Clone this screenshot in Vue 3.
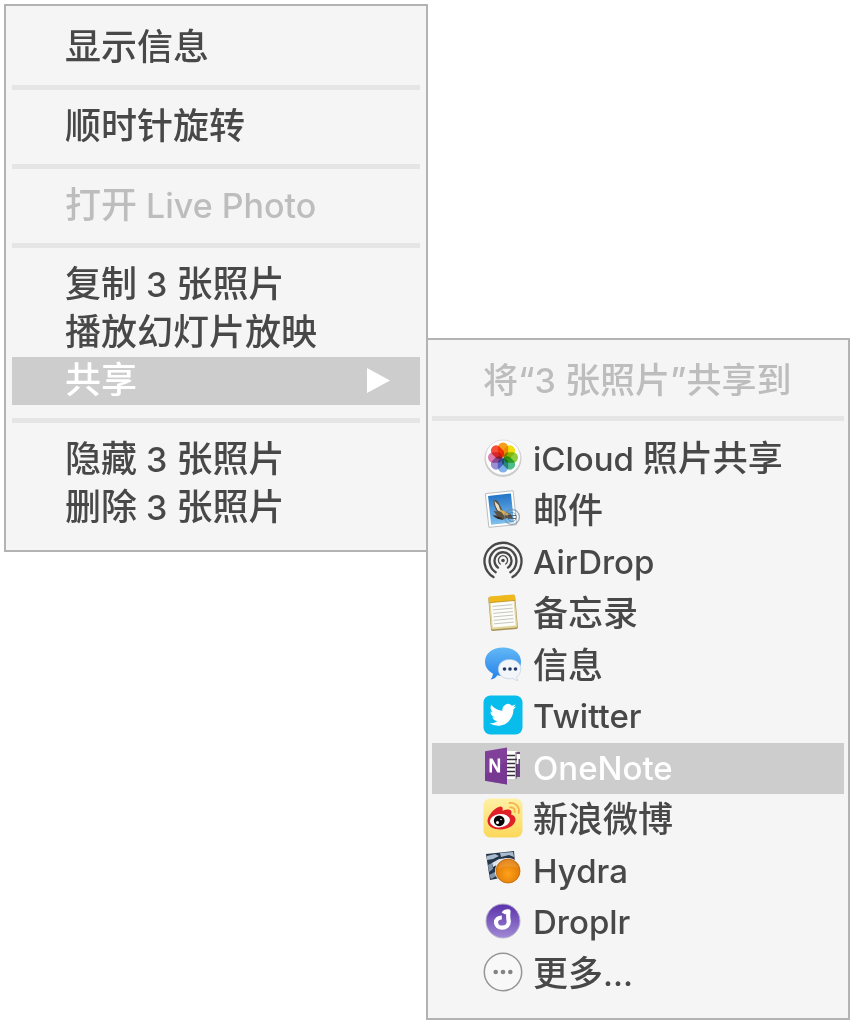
<script setup>
const groups = [
  [{ label: '显示信息' }],
  [{ label: '顺时针旋转' }],
  [{ label: '打开 Live Photo', disabled: true }],
  [{ label: '复制 3 张照片' }, { label: '播放幻灯片放映' }, { label: '共享', submenu: true }],
  [{ label: '隐藏 3 张照片' }, { label: '删除 3 张照片' }]
]

const title = '将“3 张照片”共享到'

const targets = [
  { id: 'photos', label: 'iCloud 照片共享' },
  { id: 'mail', label: '邮件' },
  { id: 'airdrop', label: 'AirDrop' },
  { id: 'notes', label: '备忘录' },
  { id: 'messages', label: '信息' },
  { id: 'twitter', label: 'Twitter' },
  { id: 'onenote', label: 'OneNote', active: true },
  { id: 'weibo', label: '新浪微博' },
  { id: 'hydra', label: 'Hydra' },
  { id: 'droplr', label: 'Droplr' },
  { id: 'more', label: '更多...' }
]

const petals = [
  { color: '#f9a01b', angle: 0 },
  { color: '#f3e00c', angle: 45 },
  { color: '#8fd03e', angle: 90 },
  { color: '#4fbf8b', angle: 135 },
  { color: '#7fb3ec', angle: 180 },
  { color: '#9d8fd4', angle: 225 },
  { color: '#df7fb0', angle: 270 },
  { color: '#f8503c', angle: 315 }
]

// Splits a label into Latin and Chinese runs so each gets its own size.
const runs = (text) =>
  text.match(/[ -~]+|[^ -~]+/g).map((part) => ({ part, latin: /[ -~]/.test(part) }))
</script>

<template>
  <main class="page">
    <nav class="menu" aria-label="照片">
      <template v-for="(group, g) in groups" :key="g">
        <hr v-if="g" class="rule" />
        <ul class="list">
          <li v-for="item in group" :key="item.label">
            <button
              type="button"
              class="item"
              :class="{ active: item.submenu }"
              :disabled="item.disabled"
            >
              <span><span v-for="(r, i) in runs(item.label)" :key="i" :class="{ latin: r.latin }">{{ r.part }}</span></span>
              <svg v-if="item.submenu" class="arrow" viewBox="0 0 23 25" aria-hidden="true">
                <path d="M0 0 23 12.500 0 25z" fill="#fff" />
              </svg>
            </button>
          </li>
        </ul>
      </template>
    </nav>

    <nav class="menu share" aria-label="共享">
      <h2 class="title"><span v-for="(r, i) in runs(title)" :key="i" :class="{ latin: r.latin }">{{ r.part }}</span></h2>
      <hr class="rule" />
      <ul class="list targets">
        <li v-for="t in targets" :key="t.id">
          <button type="button" class="item target" :class="{ active: t.active }">
            <svg v-if="t.id === 'photos'" class="icon" viewBox="0 0 40 40" aria-hidden="true">
              <circle cx="20" cy="20.500" r="18.500" fill="#c9c9c9" />
              <circle cx="20" cy="19.500" r="17.500" fill="#fdfdfd" stroke="#d2d2d2" stroke-width=".6" />
              <g class="petals">
                <rect
                  v-for="p in petals"
                  :key="p.angle"
                  x="14.800" y="4.500" width="10.400" height="14.500" rx="5.200"
                  :fill="p.color"
                  :transform="`rotate(${p.angle} 20 19.500)`"
                />
              </g>
            </svg>

            <svg v-else-if="t.id === 'mail'" class="icon" viewBox="0 0 40 40" aria-hidden="true">
              <defs>
                <linearGradient id="sky" x1="0" y1="0" x2="0" y2="1">
                  <stop offset="0" stop-color="#2374c8" />
                  <stop offset="1" stop-color="#7fc0ee" />
                </linearGradient>
              </defs>
              <g transform="rotate(-6 19 20)">
                <rect x="4" y="3" width="28" height="34" rx="1" fill="#fff" stroke="#b9bdc2" stroke-width="1" />
                <rect x="6.500" y="5.500" width="23" height="29" fill="url(#sky)" />
              </g>
              <path d="M10.500 11.500q3-1.500 5 2l4 8 8 3.500 2.500 4-6 0-5 2-6-2.500-4-3 5 1-3.500-4.500 3.500 .5q-3.500-5-3.500-11z" fill="#5d5140" />
              <path d="m11.500 12 4 4 2.500 7-3-1.500q-3-4-3.500-9.500z" fill="#e9dfc8" />
              <path d="m16 20 6 2.500 5 3.500-6 .5z" fill="#d8ae58" />
              <path d="m10 27 7 1 3 2.500-5-.5z" fill="#2b2a28" />
              <circle cx="29" cy="28" r="7.500" fill="none" stroke="#70859a" stroke-width="1.300" opacity=".65" />
              <circle cx="29" cy="28" r="4.500" fill="none" stroke="#526b84" stroke-width=".8" opacity=".7" />
              <path d="M25 26.500h8m-8 3h8" stroke="#394b61" stroke-width=".8" />
            </svg>

            <svg v-else-if="t.id === 'airdrop'" class="icon" viewBox="0 0 40 40" aria-hidden="true">
              <g fill="none" stroke="#484848" stroke-width="2.300" stroke-linecap="round">
                <path d="M10.500 36.100A18.500 18.500 0 1 1 29.500 36.100" />
                <path d="M12.700 31.200A13.400 13.400 0 1 1 27.300 31.200" />
                <path d="M15 26.600A8.500 8.500 0 1 1 25 26.600" />
                <path d="M17.300 23A4.600 4.600 0 1 1 22.700 23" stroke-width="1.300" />
              </g>
              <circle cx="20" cy="19.500" r="1.800" fill="#484848" />
            </svg>

            <svg v-else-if="t.id === 'notes'" class="icon" viewBox="0 0 40 40" aria-hidden="true">
              <g transform="rotate(-5 20 20)">
                <rect x="6.500" y="4" width="27" height="34" rx="1.500" fill="#a79355" />
                <rect x="7" y="4" width="26" height="32.500" rx="1" fill="#e3d49a" />
                <rect x="8.500" y="8" width="23" height="26.500" fill="#fcfcf8" />
                <path d="M7 5q0-1.500 1.500-1.500h23Q33 3.500 33 5v4.500H7z" fill="#efb91c" />
                <path d="M7 9.500h26" stroke="#bd8f1a" stroke-width=".8" />
                <path d="M10 13.500h20M10 17h20M10 20.500h20M10 24h20M10 27.500h20M10 31h20" stroke="#c1c1bd" stroke-width=".9" />
              </g>
            </svg>

            <svg v-else-if="t.id === 'messages'" class="icon" viewBox="0 0 40 40" aria-hidden="true">
              <defs>
                <linearGradient id="bubble" x1="0" y1="0" x2="0" y2="1">
                  <stop offset="0" stop-color="#62b8f6" />
                  <stop offset="1" stop-color="#2681e8" />
                </linearGradient>
              </defs>
              <path d="M20 3.500c10.500 0 18 5.800 18 14.200S30.500 32 20 32c-2 0-4-.2-5.700-.7Q12 35 7.600 35.500q2.600-3 2.200-6C5 27 2 22.800 2 17.700 2 9.300 9.500 3.500 20 3.500z" fill="url(#bubble)" />
              <path d="M26.500 15.500c7 0 11.300 4.200 11.300 9.700 0 3.200-1.500 6-4.200 7.700 0 1.500.5 2.600 1.400 3.600-2.200-.2-3.800-1-4.900-2.200-1.100.3-2.300.4-3.600.4-7 0-11.200-4.100-11.200-9.500s4.200-9.700 11.200-9.700z" fill="#f2f5fa" stroke="#b8cadd" stroke-width=".6" />
              <g fill="#223b68">
                <circle cx="21.500" cy="25" r="1.800" />
                <circle cx="27" cy="25" r="1.800" />
                <circle cx="32.500" cy="25" r="1.800" />
              </g>
            </svg>

            <svg v-else-if="t.id === 'twitter'" class="icon" viewBox="0 0 40 40" aria-hidden="true">
              <rect x=".5" y=".5" width="39" height="39" rx="7" fill="#08bcec" />
              <g transform="translate(6.500 6.500) scale(1.110)">
                <path d="M23.950 4.570a10 10 0 0 1-2.820.77 4.960 4.960 0 0 0 2.160-2.720c-.95.550-2 .95-3.130 1.180a4.920 4.920 0 0 0-8.380 4.480C7.690 8.090 4.070 6.130 1.640 3.160a4.820 4.820 0 0 0-.67 2.480c0 1.710.87 3.210 2.190 4.100a4.900 4.900 0 0 1-2.230-.62v.06a4.920 4.920 0 0 0 3.950 4.830 5 5 0 0 1-2.210.08 4.940 4.940 0 0 0 4.600 3.420A9.870 9.870 0 0 1 0 19.540a14 14 0 0 0 7.550 2.210c9.050 0 14-7.500 14-13.990 0-.21 0-.42-.02-.63a9.900 9.900 0 0 0 2.420-2.560z" fill="#fff" />
              </g>
            </svg>

            <svg v-else-if="t.id === 'onenote'" class="icon" viewBox="0 0 40 40" aria-hidden="true">
              <path d="M31 6h6v25h-6z" fill="#71408a" />
              <path d="M22 5h11.500v3H37v5h-1.500v5H33v15H22z" fill="#fff" />
              <path d="M24 9.500h8M24 13.500h10M24 17.500h8M24 21.500h8M24 25.500h8M24 29.500h8" stroke="#392f3c" stroke-width="1.600" />
              <path d="M33 6v27" stroke="#392f3c" stroke-width=".8" />
              <path d="M2 5.200 24 1.500v37L2 34.800z" fill="#80409a" />
              <path d="M2 28 24 15v23.500L2 34.800z" fill="#6f318a" opacity=".55" />
              <path d="M6.500 26.500V12.500h2.900l5.200 9.200v-9.200h2.500v14h-2.800l-5.300-9.300v9.300z" fill="#fff" />
            </svg>

            <svg v-else-if="t.id === 'weibo'" class="icon" viewBox="0 0 40 40" aria-hidden="true">
              <defs>
                <linearGradient id="sun" x1="0" y1="0" x2="0" y2="1">
                  <stop offset="0" stop-color="#fff0a4" />
                  <stop offset="1" stop-color="#fbd85a" />
                </linearGradient>
              </defs>
              <rect x=".5" y=".5" width="39" height="39" rx="7" fill="url(#sun)" />
              <path d="M17.500 8.500c2.500 0 2.500 2.500 2 4.200 4-1.600 8.400-1.800 9 1 .3 1.200-.4 2.300-.4 2.800 2.600.8 4.400 2.400 4.400 5 0 5.200-7 10-14.800 10C10 31.500 4.500 28 4.500 23c0-5.700 8.500-14.500 13-14.500z" fill="#df2029" />
              <ellipse cx="17" cy="22.700" rx="10" ry="6.700" fill="#fff" transform="rotate(-7 17 22.700)" />
              <circle cx="16.200" cy="22.800" r="5.400" fill="#080808" />
              <circle cx="14.500" cy="24.500" r="1.500" fill="#fff" />
              <circle cx="18" cy="21.500" r=".8" fill="#fff" />
              <g fill="none" stroke="#f2b34b" stroke-width="1.800" stroke-linecap="round">
                <path d="M26.500 5C32 4 37 8.500 35.700 15" />
                <path d="M27.200 9.300C30.200 9 32.200 11.200 31.700 14" />
              </g>
            </svg>

            <svg v-else-if="t.id === 'hydra'" class="icon" viewBox="0 0 40 40" aria-hidden="true">
              <defs>
                <radialGradient id="orb" cx=".5" cy=".62" r=".6">
                  <stop offset="0" stop-color="#ffa21a" />
                  <stop offset="1" stop-color="#dd7504" />
                </radialGradient>
              </defs>
              <path d="m3 5 28-3 2 24-26 5z" fill="#26364a" />
              <path d="m4 7 8-2 4 2-6 3-6 1zM17 4l13-1 1 5-5-2-8 2z" fill="#a9bccf" />
              <path d="m9 14 7-4 10-1-8 5-8 4z" fill="#dbe4ec" />
              <path d="M5 16l4-2 1 6-4 3zM6 26l6-3 3 3-7 4z" fill="#8194aa" />
              <path d="m11 18 5-3 4 1-7 6z" fill="#0e1521" />
              <circle cx="25" cy="22" r="13" fill="#f7f1e7" />
              <circle cx="25" cy="22" r="12" fill="url(#orb)" stroke="#b8670f" stroke-width=".8" />
              <path d="M15 20a10 9 0 0 1 20-1q-10-4-20 1z" fill="#fff" opacity=".12" />
            </svg>

            <svg v-else-if="t.id === 'droplr'" class="icon" viewBox="0 0 40 40" aria-hidden="true">
              <defs>
                <linearGradient id="drop" x1="0" y1="0" x2="0" y2="1">
                  <stop offset="0" stop-color="#5a31aa" />
                  <stop offset="1" stop-color="#a08ad4" />
                </linearGradient>
              </defs>
              <circle cx="20" cy="20" r="17" fill="url(#drop)" stroke="#b9b0cc" stroke-width="1" />
              <path d="M20.500 12.500q1.500-2.500 5-2.200-.8 5 .3 10.200c0 3.800-2.900 6.200-6.500 6.200-3.900 0-6.300-2.200-6.300-5.200 0-2.900 2.200-5 5.800-5" fill="none" stroke="#fff" stroke-width="4.200" stroke-linejoin="round" />
            </svg>

            <svg v-else class="icon" viewBox="0 0 40 40" aria-hidden="true">
              <circle cx="20" cy="20" r="18.700" fill="#f8f8f8" stroke="#969696" stroke-width="1.500" />
              <g fill="#848484">
                <circle cx="12.700" cy="20" r="2.300" />
                <circle cx="20" cy="20" r="2.300" />
                <circle cx="27.300" cy="20" r="2.300" />
              </g>
            </svg>
            <span><span v-for="(r, i) in runs(t.label)" :key="i" :class="{ latin: r.latin }">{{ r.part }}</span></span>
          </button>
        </li>
      </ul>
    </nav>
  </main>
</template>

<style>
body {
  background: #fff;
}
</style>

<style scoped>
.page {
  display: grid;
  grid-template-columns: 1fr 1fr;
  align-items: start;
  padding: 4px;
  font-family: Inter, "Noto Sans CJK SC", sans-serif;
  font-weight: 500;
  color: #484848;
}

.menu {
  margin-right: -1px;
  padding: 18px 6px;
  border: 2px solid #b3b3b3;
  background: #f5f5f5;
  font-size: 36px;
  line-height: 44px;
}

.share {
  margin: 334px 0 0 -1px;
  padding: 18px 4px;
  font-size: 35px;
}

.latin {
  font-size: 34px;
  white-space: pre;
}

.targets .latin {
  font-size: 33px;
}

.list {
  margin: 0;
  padding: 0;
  list-style: none;
}

.rule {
  height: 5px;
  margin: 13px 0;
  border: 0;
  background: #e5e5e5;
}

.item {
  display: flex;
  align-items: center;
  box-sizing: border-box;
  width: 100%;
  height: 48px;
  padding: 0 30px 2px 53px;
  border: 0;
  background: none;
  color: inherit;
  font: inherit;
  text-align: left;
  white-space: nowrap;
}

.item:disabled,
.title {
  color: #bdbdbd;
}

.active {
  background: #cdcdcd;
  color: #fff;
}

.arrow {
  width: 23px;
  height: 25px;
  margin-left: auto;
}

.title {
  margin: 0;
  padding-left: 51px;
  font-size: inherit;
  font-weight: inherit;
  line-height: 45px;
  white-space: nowrap;
}

.targets {
  display: grid;
  grid-auto-rows: 1fr;
  min-height: 566px;
}

.target {
  gap: 10px;
  height: 100%;
  padding: 0 20px 2px 51px;
}

.icon {
  flex: none;
  width: 40px;
  height: 40px;
  margin-bottom: 2px;
}

.petals rect {
  mix-blend-mode: multiply;
}
</style>
